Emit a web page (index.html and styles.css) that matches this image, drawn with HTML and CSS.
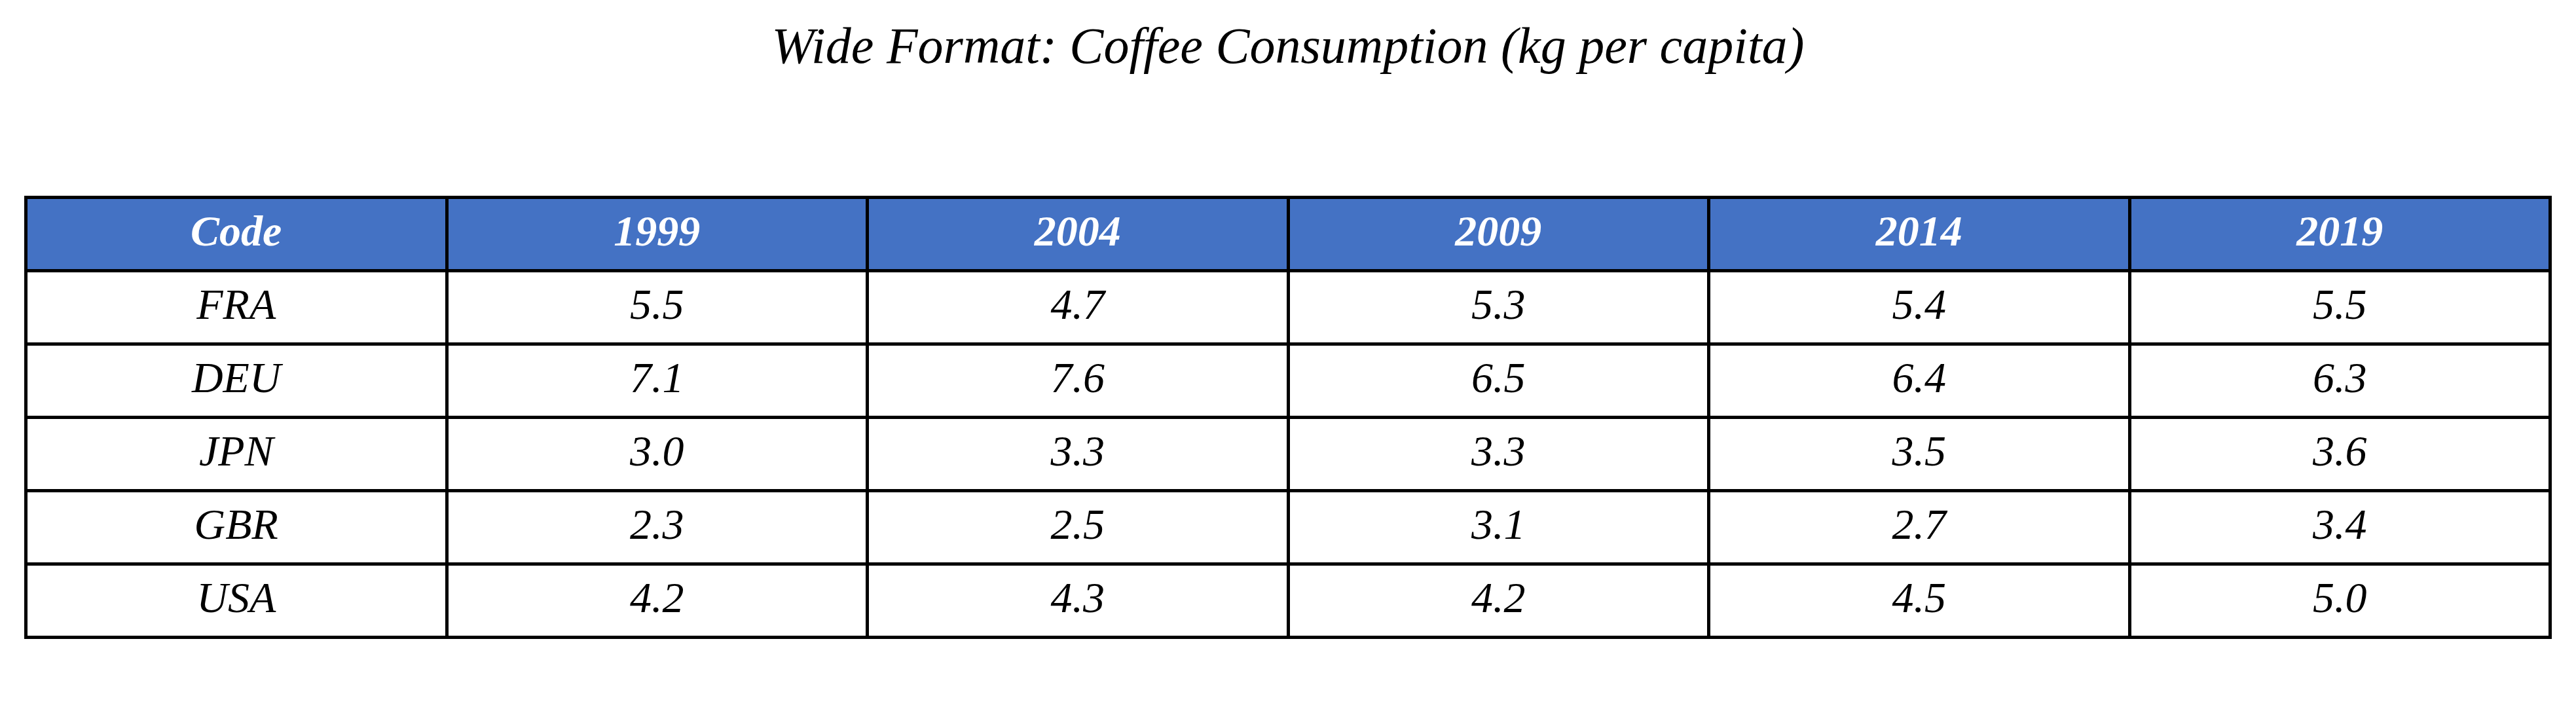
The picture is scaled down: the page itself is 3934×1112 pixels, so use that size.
FILE: index.html
```html
<!DOCTYPE html>
<html>
<head>
<meta charset="utf-8">
<link rel="stylesheet" href="styles.css">
</head>
<body>
<div class="page">
  <h1 class="title">Wide Format: Coffee Consumption (kg per capita)</h1>
  <table class="data">
    <thead>
      <tr><th>Code</th><th>1999</th><th>2004</th><th>2009</th><th>2014</th><th>2019</th></tr>
    </thead>
    <tbody>
      <tr><td>FRA</td><td>5.5</td><td>4.7</td><td>5.3</td><td>5.4</td><td>5.5</td></tr>
      <tr><td>DEU</td><td>7.1</td><td>7.6</td><td>6.5</td><td>6.4</td><td>6.3</td></tr>
      <tr><td>JPN</td><td>3.0</td><td>3.3</td><td>3.3</td><td>3.5</td><td>3.6</td></tr>
      <tr><td>GBR</td><td>2.3</td><td>2.5</td><td>3.1</td><td>2.7</td><td>3.4</td></tr>
      <tr><td>USA</td><td>4.2</td><td>4.3</td><td>4.2</td><td>4.5</td><td>5.0</td></tr>
    </tbody>
  </table>
</div>
</body>
</html>
```
FILE: styles.css
```css
html, body {
  margin: 0;
  padding: 0;
  background: #ffffff;
}
.page {
  width: 3934px;
  height: 1112px;
  font-family: "Liberation Serif", "Times New Roman", serif;
  font-style: italic;
  color: #000;
  padding-top: 31px;
  box-sizing: border-box;
}
.title {
  margin: 0;
  font-size: 78px;
  line-height: 78px;
  font-weight: normal;
  font-style: italic;
  text-align: center;
}
.data {
  margin: 190px 0 0 37px;
  width: 3860px;
  table-layout: fixed;
  border-collapse: collapse;
  border: 5px solid #000;
}
.data th, .data td {
  border: 5px solid #000;
  padding: 0 0 10px 0;
  height: 112px;
  box-sizing: border-box;
  text-align: center;
  vertical-align: middle;
  font-size: 66px;
  line-height: 1;
  font-style: italic;
}
.data th {
  background: #4472c4;
  color: #fff;
  font-weight: bold;
}
.data td {
  font-weight: normal;
}
```
